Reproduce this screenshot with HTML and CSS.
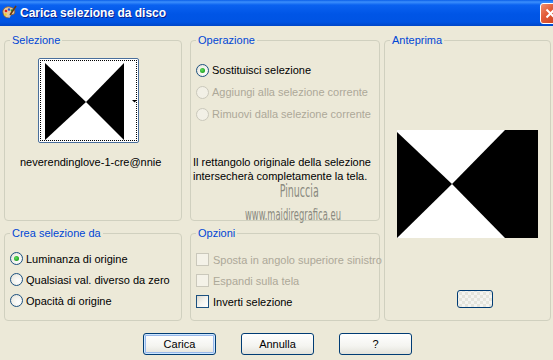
FILE: index.html
```html
<!DOCTYPE html>
<html lang="it">
<head>
    <meta charset="UTF-8">
    <title>Carica selezione da disco</title>
    <link rel="stylesheet" href="styles.css">
</head>
<body>
    <div class="window">
        <div class="titlebar">
            <svg class="app-icon" width="16" height="16" viewBox="0 0 16 16">
                <path d="M2 8 C1 4 5 1 9 2 C13 3 15 6 13 9 C12 10 10 9 9 11 C8 14 3 13 2 8 Z" fill="#e8c89a" stroke="#8a5a2a" stroke-width="0.8"/>
                <circle cx="5" cy="6" r="1.3" fill="#e02020"/>
                <circle cx="8" cy="4.5" r="1.2" fill="#2050e0"/>
                <circle cx="11" cy="5.5" r="1.2" fill="#20a030"/>
                <circle cx="4.5" cy="9.5" r="1.2" fill="#f0d020"/>
                <path d="M15 1 L9 10" stroke="#6a3a10" stroke-width="1.6"/>
                <path d="M9 10 L7.5 12.5" stroke="#c0c0c0" stroke-width="2"/>
            </svg>
            <span class="title">Carica selezione da disco</span>
            <span class="close-btn">
                <svg width="11" height="11" viewBox="0 0 11 11"><path d="M1.5 1.5 L9.5 9.5 M9.5 1.5 L1.5 9.5" stroke="#fff" stroke-width="2"/></svg>
            </span>
        </div>

        <div class="client">
            <div class="groups">
                <fieldset class="group group-sel">
                    <legend>Selezione</legend>
                    <div class="thumb">
                        <div class="thumb-inner">
                            <svg width="95" height="79" viewBox="0 0 95 79">
                                <rect width="95" height="79" fill="#fff"/>
                                <polygon points="4,2 4,79 45,41" fill="#000"/>
                                <polygon points="83,2 83,79 45,41" fill="#000"/>
                                <polygon points="91,39 96,39 93.5,41.5" fill="#000"/>
                            </svg>
                        </div>
                    </div>
                    <div class="sel-name">neverendinglove-1-cre@nnie</div>
                </fieldset>

                <fieldset class="group group-op col2">
                    <legend>Operazione</legend>
                    <div class="opt-list op-list">
                        <div class="opt"><span class="radio checked"></span>Sostituisci selezione</div>
                        <div class="opt disabled"><span class="radio"></span>Aggiungi alla selezione corrente</div>
                        <div class="opt disabled"><span class="radio"></span>Rimuovi dalla selezione corrente</div>
                    </div>
                    <p class="op-note">Il rettangolo originale della selezione<br>intersecherà completamente la tela.</p>
                </fieldset>

                <fieldset class="group group-prev">
                    <legend>Anteprima</legend>
                    <svg class="preview" width="141" height="108" viewBox="0 0 141 108">
                        <rect width="141" height="108" fill="#fff"/>
                        <polygon points="0,2 0,108 55,54" fill="#000"/>
                        <polygon points="108,0 141,0 141,108 108,108 55,54" fill="#000"/>
                    </svg>
                    <span class="zoom-btn"></span>
                </fieldset>

                <fieldset class="group group-crea">
                    <legend>Crea selezione da</legend>
                    <div class="opt-list crea-list">
                        <div class="opt"><span class="radio checked"></span>Luminanza di origine</div>
                        <div class="opt"><span class="radio"></span>Qualsiasi val. diverso da zero</div>
                        <div class="opt"><span class="radio"></span>Opacità di origine</div>
                    </div>
                </fieldset>

                <fieldset class="group group-opz col2">
                    <legend>Opzioni</legend>
                    <div class="opt-list opz-list">
                        <div class="opt disabled"><span class="check"></span>Sposta in angolo superiore sinistro</div>
                        <div class="opt disabled"><span class="check"></span>Espandi sulla tela</div>
                        <div class="opt"><span class="check"></span>Inverti selezione</div>
                    </div>
                </fieldset>
            </div>

            <div class="buttons">
                <button class="btn default">Carica</button>
                <button class="btn">Annulla</button>
                <button class="btn">?</button>
            </div>

            <div class="watermark">
                <div class="wm-name">Pinuccia</div>
                <div class="wm-site">www.maidiregrafica.eu</div>
            </div>
        </div>
    </div>
</body>
</html>
```

FILE: styles.css
```css
body {
    margin: 0;
    padding: 0;
    width: 553px;
    height: 360px;
    overflow: hidden;
    background-color: #ece9d8;
    font-family: "Liberation Sans", Arial, sans-serif;
    font-size: 11px;
    color: #000;
}

.window {
    width: 553px;
    height: 360px;
    display: flex;
    flex-direction: column;
}

/* title bar */
.titlebar {
    height: 26px;
    flex: none;
    display: flex;
    align-items: center;
    overflow: hidden;
    background: linear-gradient(#0a5ee8 0, #3c8ffc 2px, #0a62f0 5px, #0055e6 14px, #0054e3 22px, #0046c8 26px);
}

.app-icon {
    margin-left: 1px;
    margin-right: 3px;
}

.title {
    flex: 1;
    color: #fff;
    font-weight: bold;
    font-size: 12px;
    text-shadow: 1px 1px 0 #0a1e8c;
}

.close-btn {
    flex: none;
    width: 21px;
    height: 21px;
    margin-right: -8px;
    box-sizing: border-box;
    border: 1px solid #fff;
    border-radius: 3px;
    background: linear-gradient(135deg, #f09070 0, #e25c38 40%, #c83c1c 100%);
    display: flex;
    align-items: center;
    justify-content: center;
}

/* client area */
.client {
    flex: 1;
    position: relative;
}

.groups {
    display: grid;
    grid-template-columns: 178px 194px 167px;
    grid-template-rows: 188px 95px;
    column-gap: 4px;
    row-gap: 5px;
    padding: 7px 0 0 4px;
}

.group {
    margin: 0;
    padding: 0;
    min-width: 0;
    border: 1px solid #d0d0bf;
    border-radius: 4px;
    display: flex;
    flex-direction: column;
    align-items: flex-start;
}

.group legend {
    margin-left: 5px;
    padding: 0 2px;
    line-height: 14px;
    color: #0046d5;
}

.col2 {
    margin-left: 4px;
}

.group-prev {
    grid-column: 3;
    grid-row: 1 / 3;
}

.group-crea {
    grid-column: 1;
    grid-row: 2;
}

.group-opz {
    grid-column: 2;
    grid-row: 2;
}

/* selection thumbnail */
.thumb {
    margin: 11px 0 0 33px;
    width: 101px;
    height: 85px;
    box-sizing: border-box;
    border: 1px solid #4a6f9c;
    border-radius: 2px;
    background-color: #fff;
    padding: 1px;
}

.thumb-inner {
    border: 1px dotted #000;
    display: flex;
}

.sel-name {
    margin: 12px 0 0 15px;
    line-height: 14px;
}

/* radios and checkboxes */
.opt-list {
    display: flex;
    flex-direction: column;
}

.opt {
    display: flex;
    align-items: center;
    gap: 3px;
    white-space: nowrap;
}

.opt.disabled {
    color: #aca899;
}

.op-list {
    padding: 12px 0 0 5px;
}

.op-list .opt {
    height: 22px;
}

.crea-list {
    padding: 8px 0 0 5px;
}

.crea-list .opt,
.opz-list .opt {
    height: 21px;
}

.opz-list {
    padding: 9px 0 0 5px;
}

.opz-list .opt {
    gap: 4px;
}

.radio {
    width: 13px;
    height: 13px;
    box-sizing: border-box;
    border: 1px solid #1c5180;
    border-radius: 50%;
    background: radial-gradient(circle at 65% 65%, #fff 0, #f0efe8 60%, #dcdad0 100%);
    display: flex;
    align-items: center;
    justify-content: center;
}

.radio.checked::after {
    content: "";
    width: 5px;
    height: 5px;
    border-radius: 50%;
    background: radial-gradient(circle at 40% 40%, #5fe05f 0, #21a121 70%);
}

.disabled .radio {
    border-color: #cac8bb;
    background: #f2f0e6;
}

.check {
    width: 13px;
    height: 13px;
    box-sizing: border-box;
    border: 1px solid #1c5180;
    background: linear-gradient(135deg, #dcdad0 0, #f4f3ee 50%, #fff 100%);
}

.disabled .check {
    border-color: #cac8bb;
    background: #f4f2e8;
}

.op-note {
    margin: 30px 0 0 2px;
    line-height: 14px;
}

/* preview */
.preview {
    margin: 83px 0 0 12px;
}

.zoom-btn {
    margin: 52px 0 0 72px;
    width: 36px;
    height: 18px;
    box-sizing: border-box;
    border: 1px solid #003c74;
    border-radius: 3px;
    background:
        repeating-conic-gradient(#f4f4f0 0 25%, #e4e4dc 0 50%) 10px 4px / 6px 6px,
        #f4f4f0;
}

/* dialog buttons */
.buttons {
    display: flex;
    gap: 25px;
    padding: 12px 0 0 143px;
}

.btn {
    width: 73px;
    height: 22px;
    padding: 0;
    border: 1px solid #003c74;
    border-radius: 3px;
    background: linear-gradient(#ffffff 0, #f4f4f0 60%, #e3e2da 100%);
    font-family: inherit;
    font-size: 11px;
    color: #000;
}

.btn.default {
    box-shadow: inset 0 0 0 1px #cee7ff, inset 0 0 0 2px #98b8ea;
}

/* watermark over the dialog */
.watermark {
    position: absolute;
    left: 245px;
    top: 157px;
    color: #8a8a80;
    font-family: "DejaVu Sans Condensed", "DejaVu Sans", sans-serif;
    white-space: nowrap;
    transform: scaleX(0.62);
    transform-origin: left top;
}

.wm-name {
    margin-left: 56px;
    font-size: 17px;
    line-height: 17px;
}

.wm-site {
    margin-top: 7px;
    font-size: 15px;
    line-height: 16px;
}
```
